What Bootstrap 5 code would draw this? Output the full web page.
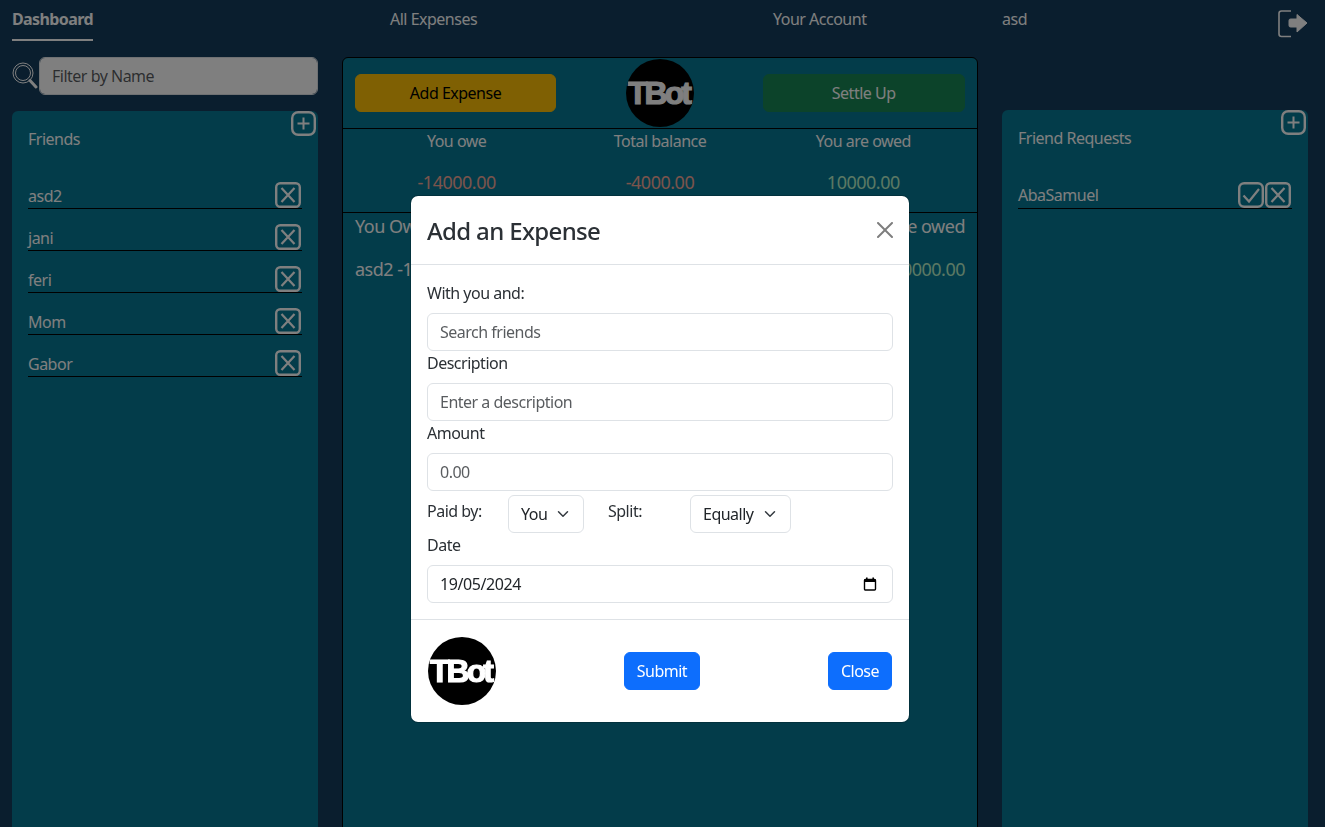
<!DOCTYPE html>
<html lang="en">
<head>
<meta charset="utf-8">
<title>TBot Dashboard</title>
<link href="https://cdn.jsdelivr.net/npm/bootstrap@5.3.0/dist/css/bootstrap.min.css" rel="stylesheet">
<style>
html,body{height:100%;overflow:hidden}
body{background:#143c5c;color:#fff;font-family:"Noto Sans","Open Sans",sans-serif;font-size:16px}
body,input,select,button{letter-spacing:-.5px}
.top-bar{height:57px;padding-left:12px;padding-right:17px}
.top-link{display:block;color:#fff;text-decoration:none;padding:7px 0 8px;line-height:24px}
.top-link.is-current{font-weight:700;border-bottom:2px solid #fff;letter-spacing:-.6px}
.slot-a{width:378px}.slot-b{width:383px}.slot-c{width:229px}
.exit-link{padding-top:10px}
.board{height:790px;padding:0 17px 0 12px;gap:24px}
.side-col{width:306px;flex:none}
.mid-col{width:636px;flex:none}
.filter-row{height:38px;margin-bottom:16px;gap:1px}
.teal-panel{background:#077894;border-top-left-radius:6px;border-top-right-radius:6px}
.side-panel{height:736px}
.side-panel.is-raised{height:737px;margin-top:53px}
.panel-head{height:40px;padding:0 2px 0 16px}
.panel-title{margin-top:16px;line-height:24px}
.people{margin:33px 16px 0}
.people.is-raised{margin-top:34px}
.people.is-raised span{margin-bottom:1px}
.person{height:25px;margin-bottom:17px;border-bottom:1px solid #000;line-height:24px}
.person svg{margin-right:1px;margin-top:-1px}
.ledger{height:790px;border:1px solid #000;border-radius:6px 6px 0 0}
.ledger-top{height:71px;padding:0 12px;border-bottom:1px solid #000}
.ledger-top .btn{height:38px}
.btn-wide-a{width:201px}
.btn-wide-b{width:202px;margin-left:1px}
.totals{padding:0 12px;height:84px;border-bottom:1px solid #000;text-align:center}
.totals-label{line-height:24px;margin-bottom:16px}
.totals-value{font-size:18px;line-height:27px}
.val-red{color:#f5a898}.val-green{color:#b8f0c8}
.owed-lists{padding:0 12px;font-size:18px;line-height:27px}
.owed-lists .owed-line{margin-top:16px}
.tbot-disc{width:68px;height:68px;border-radius:50%;background:#000;color:#fff;font:700 32px/68px "Liberation Sans",sans-serif;letter-spacing:-3px;text-align:center;-webkit-text-stroke:1.2px currentColor;padding-right:3px;flex:none;white-space:nowrap;overflow:hidden}
.ledger-top .tbot-disc{margin:0 auto}
.sheet{max-width:500px;margin:195px auto 0 410px}
.sheet .modal-content{color:#2b3035}
.sheet .modal-title{font-size:24px;font-weight:500;letter-spacing:-.65px;line-height:36px;padding-top:1px;margin-bottom:-1px}
.sheet .modal-footer{padding:17px}
.sheet .modal-footer>*{margin:0}
.sheet .modal-body{padding:16px}
.sheet .form-label{display:block;margin-bottom:8px;line-height:24px}
.sheet .form-control,.sheet .form-select{height:38px}
.choice-row{height:42px}
.choice-label{margin-top:8px;line-height:24px}
.choice-label.w-paid{width:81px}
.choice-label.w-split{width:82px;margin-left:24px}
.choice-row .form-select{margin-top:4px}
.sel-you{width:76px}
.sel-eq{width:101px}
.date-field{letter-spacing:-.4px;background:#fff url("data:image/svg+xml,%3Csvg xmlns='http://www.w3.org/2000/svg' viewBox='0 0 14 14'%3E%3Crect x='1.5' y='2.5' width='11' height='10.5' rx='1' fill='none' stroke='%23000' stroke-width='1.4'/%3E%3Crect x='1.5' y='2' width='11' height='3' fill='%23000'/%3E%3Crect x='3' y='.5' width='1.6' height='2' fill='%23000'/%3E%3Crect x='9.4' y='.5' width='1.6' height='2' fill='%23000'/%3E%3C/svg%3E") no-repeat right 15px center/14px 14px}
</style>
</head>
<body>
<nav class="top-bar d-flex align-items-start">
  <div class="slot-a"><a class="top-link is-current d-inline-block" href="#">Dashboard</a></div>
  <div class="slot-b"><a class="top-link" href="#">All Expenses</a></div>
  <div class="slot-c"><a class="top-link" href="#">Your Account</a></div>
  <div><a class="top-link" href="#">asd</a></div>
  <a class="ms-auto exit-link" href="#" aria-label="Log out">
    <svg width="30" height="28" viewBox="0 0 30 28" fill="none"><path d="M13 1H3.5Q1 1 1 3.5V24Q1 26.500 3.500 26.500H13" stroke="#fff" stroke-width="1.600"/><path d="M11 10.500Q11 9 12.500 9H19V4.500L29 13L19 22V17H12.500Q11 17 11 15.500Z" fill="#fff" stroke="#fff" stroke-linejoin="round"/></svg>
  </a>
</nav>

<main class="board d-flex">
  <section class="side-col">
    <div class="filter-row d-flex align-items-center">
      <svg width="26" height="28" viewBox="0 0 26 28" fill="none" stroke="#fff" class="flex-shrink-0"><circle cx="11" cy="11" r="10" stroke-width="1"/><circle cx="11" cy="11" r="7.500" stroke-width="1"/><path d="M18 18.500l6 6.500" stroke-width="3" stroke-linecap="round"/></svg>
      <input class="form-control" placeholder="Filter by Name">
    </div>
    <div class="teal-panel side-panel">
      <div class="panel-head d-flex justify-content-between align-items-start">
        <div class="panel-title">Friends</div>
        <svg width="25" height="25" viewBox="0 0 25 25" fill="none" stroke="#fff"><rect x="1.200" y="1.200" width="22.600" height="22.600" rx="6" stroke-width="2.400"/><path d="M12.500 6.500v12M6.500 12.500h12" stroke-width="2"/></svg>
      </div>
      <div class="people">
        <div class="person d-flex justify-content-between align-items-end"><span>asd2</span><svg width="26" height="26" viewBox="0 0 26 26" fill="none" stroke="#fff"><rect x="1.200" y="1.200" width="23.600" height="23.600" rx="4" stroke-width="2.400"/><path d="M6.500 6l13 14M19.500 6l-13 14" stroke-width="2.200"/></svg></div>
        <div class="person d-flex justify-content-between align-items-end"><span>jani</span><svg width="26" height="26" viewBox="0 0 26 26" fill="none" stroke="#fff"><rect x="1.200" y="1.200" width="23.600" height="23.600" rx="4" stroke-width="2.400"/><path d="M6.500 6l13 14M19.500 6l-13 14" stroke-width="2.200"/></svg></div>
        <div class="person d-flex justify-content-between align-items-end"><span>feri</span><svg width="26" height="26" viewBox="0 0 26 26" fill="none" stroke="#fff"><rect x="1.200" y="1.200" width="23.600" height="23.600" rx="4" stroke-width="2.400"/><path d="M6.500 6l13 14M19.500 6l-13 14" stroke-width="2.200"/></svg></div>
        <div class="person d-flex justify-content-between align-items-end"><span>Mom</span><svg width="26" height="26" viewBox="0 0 26 26" fill="none" stroke="#fff"><rect x="1.200" y="1.200" width="23.600" height="23.600" rx="4" stroke-width="2.400"/><path d="M6.500 6l13 14M19.500 6l-13 14" stroke-width="2.200"/></svg></div>
        <div class="person d-flex justify-content-between align-items-end"><span>Gabor</span><svg width="26" height="26" viewBox="0 0 26 26" fill="none" stroke="#fff"><rect x="1.200" y="1.200" width="23.600" height="23.600" rx="4" stroke-width="2.400"/><path d="M6.500 6l13 14M19.500 6l-13 14" stroke-width="2.200"/></svg></div>
      </div>
    </div>
  </section>

  <section class="mid-col">
    <div class="teal-panel ledger">
      <div class="ledger-top row g-0 align-items-center">
        <div class="col-4"><button class="btn btn-warning btn-wide-a" type="button">Add Expense</button></div>
        <div class="col-4"><div class="tbot-disc">TBot</div></div>
        <div class="col-4"><button class="btn btn-success btn-wide-b" type="button">Settle Up</button></div>
      </div>
      <div class="totals row g-0">
        <div class="col-4"><div class="totals-label">You owe</div><div class="totals-value val-red">-14000.00</div></div>
        <div class="col-4"><div class="totals-label">Total balance</div><div class="totals-value val-red">-4000.00</div></div>
        <div class="col-4"><div class="totals-label">You are owed</div><div class="totals-value val-green">10000.00</div></div>
      </div>
      <div class="owed-lists d-flex justify-content-between">
        <div><div>You Owe</div><div class="owed-line">asd2 -14000.00</div></div>
        <div class="text-end"><div>You are owed</div><div class="owed-line val-green">10000.00</div></div>
      </div>
    </div>
  </section>

  <section class="side-col">
    <div class="teal-panel side-panel is-raised">
      <div class="panel-head d-flex justify-content-between align-items-start">
        <div class="panel-title">Friend Requests</div>
        <svg width="25" height="25" viewBox="0 0 25 25" fill="none" stroke="#fff"><rect x="1.200" y="1.200" width="22.600" height="22.600" rx="6" stroke-width="2.400"/><path d="M12.500 6.500v12M6.500 12.500h12" stroke-width="2"/></svg>
      </div>
      <div class="people is-raised">
        <div class="person d-flex align-items-end"><span class="me-auto">AbaSamuel</span><svg width="26" height="26" viewBox="0 0 26 26" fill="none" stroke="#fff"><rect x="1.200" y="1.200" width="23.600" height="23.600" rx="5" stroke-width="2.400"/><path d="M5.500 13.500l5.500 6L21 7" stroke-width="2.200"/></svg><svg width="26" height="26" viewBox="0 0 26 26" fill="none" stroke="#fff"><rect x="1.200" y="1.200" width="23.600" height="23.600" rx="4" stroke-width="2.400"/><path d="M6.500 6l13 14M19.500 6l-13 14" stroke-width="2.200"/></svg></div>
      </div>
    </div>
  </section>
</main>

<div class="modal-backdrop fade show"></div>
<div class="modal fade show d-block" tabindex="-1" role="dialog">
  <div class="modal-dialog sheet">
    <div class="modal-content">
      <div class="modal-header">
        <h5 class="modal-title">Add an Expense</h5>
        <button type="button" class="btn-close" aria-label="Close"></button>
      </div>
      <div class="modal-body">
        <label class="form-label">With you and:</label>
        <input class="form-control" placeholder="Search friends">
        <label class="form-label">Description</label>
        <input class="form-control" placeholder="Enter a description">
        <label class="form-label">Amount</label>
        <input class="form-control" placeholder="0.00">
        <div class="choice-row d-flex align-items-start">
          <span class="choice-label w-paid">Paid by:</span>
          <select class="form-select sel-you"><option>You</option></select>
          <span class="choice-label w-split">Split:</span>
          <select class="form-select sel-eq"><option>Equally</option></select>
        </div>
        <label class="form-label">Date</label>
        <input class="form-control date-field" value="19/05/2024">
      </div>
      <div class="modal-footer justify-content-between">
        <div class="tbot-disc">TBot</div>
        <button class="btn btn-primary" type="button">Submit</button>
        <button class="btn btn-primary" type="button">Close</button>
      </div>
    </div>
  </div>
</div>
</body>
</html>
